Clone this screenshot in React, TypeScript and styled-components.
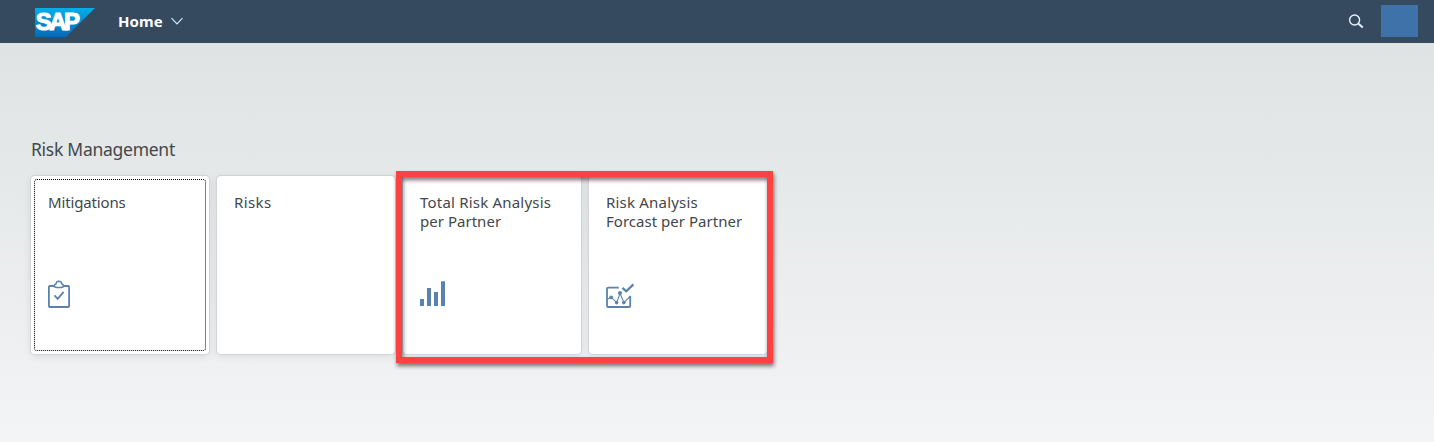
import React from "react";
import styled, { createGlobalStyle } from "styled-components";

const GlobalStyle = createGlobalStyle`
  * { box-sizing: border-box; }
  body { margin: 0; }
`;

const Page = styled.div`
  height: 442px;
  overflow: hidden;
  display: flex;
  flex-direction: column;
  background: linear-gradient(to bottom, #dfe3e4 43px, #f3f4f5 100%);
  font-family: "Noto Sans", "Open Sans", sans-serif;
  color: #43474b;
`;

const ShellBar = styled.header`
  height: 43px;
  flex: none;
  display: flex;
  align-items: center;
  padding: 0 16px 1px 35px;
  background: #354a5f;
`;

const Logo = styled.svg`
  display: block;
  margin-top: 3px;
`;

const HomeMenu = styled.div`
  display: flex;
  align-items: center;
  gap: 8px;
  margin-left: 23px;
  color: #fff;
  font: 700 15px/20px "Noto Sans", sans-serif;
  letter-spacing: 0.12px;
`;

const Tools = styled.div`
  display: flex;
  align-items: center;
  gap: 17px;
  margin-left: auto;
`;

const Avatar = styled.div`
  width: 37px;
  height: 32px;
  background: #3e72a8;
`;

const Content = styled.main`
  padding: 94px 31px 0;
`;

const GroupTitle = styled.h2`
  margin: 0 0 14px;
  height: 25px;
  font-size: 17.5px;
  line-height: 25px;
  font-weight: 400;
  letter-spacing: -0.27px;
  white-space: nowrap;
`;

const Tiles = styled.div`
  display: flex;
  gap: 8px;
`;

const Highlighted = styled.div`
  position: relative;
  display: flex;
  gap: 8px;
`;

const HighlightFrame = styled.div`
  position: absolute;
  left: -7px;
  top: -5px;
  width: 377px;
  height: 192px;
  border: 6px solid #ff4141;
  filter: drop-shadow(1px 3px 2px rgba(0, 0, 0, 0.55));
`;

const Tile = styled.div`
  width: 178px;
  height: 178px;
  padding: 3px;
  border-radius: 4px;
  background: #fff;
  box-shadow: 0 0 0 1px #d2d4d6, 0 2px 8px rgba(0, 0, 0, 0.1);
`;

const TileBody = styled.div<{ $focused?: boolean }>`
  height: 100%;
  display: flex;
  flex-direction: column;
  justify-content: space-between;
  padding: 13px 0 40px 13px;
  border: 1px dotted ${(p) => (p.$focused ? "#000" : "transparent")};
  border-radius: 3px;
`;

const TileTitle = styled.div<{ $track?: number }>`
  font-size: 15px;
  line-height: 19px;
  letter-spacing: ${(p) => p.$track ?? 0}px;
  white-space: pre-line;
`;

const TileLine = styled.span`
  letter-spacing: 0.03px;
`;

const TileIcon = styled.svg`
  display: block;
  fill: none;
  stroke: #5b82ac;
  stroke-width: 1.8;
`;

const LogoText = styled.text`
  font: 700 24px "Liberation Sans", sans-serif;
  letter-spacing: -2.6px;
  fill: #fff;
  stroke: #fff;
  stroke-width: 1.1px;
`;

function ClipboardIcon() {
  return (
    <TileIcon width="30" height="30" viewBox="0 0 30 30">
      <path d="M6 6H1.8Q.9 6 .9 7V26Q.9 27 1.8 27H20.2Q21.1 27 21.1 26V7Q21.1 6 20.2 6H15.4" />
      <path d="M6.4 6.7V5.6Q6.4 4.4 7.9 4Q8.5 1.2 10.9 1.2T13.9 4Q15.3 4.4 15.3 5.6V6.7Q10.9 8.5 6.4 6.7Z" strokeWidth="1.5" />
      <path d="M6.5 15.3L9.7 18.8L15.6 11.9" />
    </TileIcon>
  );
}

function BarsIcon() {
  return (
    <TileIcon width="30" height="30" viewBox="0 0 30 30">
      <g fill="#5b82ac" stroke="none">
        <rect x="0" y="19" width="4" height="7" />
        <rect x="7" y="8" width="4" height="18" />
        <rect x="14" y="12" width="4" height="14" />
        <rect x="21" y="1.3" width="4" height="24.7" />
      </g>
    </TileIcon>
  );
}

function ForecastIcon() {
  return (
    <TileIcon width="30" height="30" viewBox="0 0 30 30">
      <path d="M12.7 7.7H2Q1 7.7 1 8.7V26Q1 27 2 27H23.2Q24.2 27 24.2 26V16" />
      <path d="M.9 19.5L5.2 17.3L10.8 22.6L14 13.3L18 22.6L24.5 16" strokeWidth="1.1" />
      <g fill="#5b82ac" stroke="none">
        <circle cx="5.2" cy="17.3" r="1.9" />
        <circle cx="10.6" cy="22.6" r="1.8" />
        <circle cx="14" cy="13" r="2" />
        <circle cx="17.8" cy="22.6" r="1.8" />
      </g>
      <path d="M16.4 7.8L20.3 11.3L27.4 4.4" strokeWidth="2.3" />
    </TileIcon>
  );
}

function SearchIcon() {
  return (
    <svg width="16" height="18" viewBox="0 -2 16 18" fill="none" stroke="#e5f1ff" strokeWidth="1.4">
      <circle cx="6.6" cy="6" r="5" />
      <path d="M10.2 9.6L14.8 13.6" strokeWidth="2" />
    </svg>
  );
}

export default function App() {
  return (
    <Page>
      <GlobalStyle />
      <ShellBar>
        <Logo width="60" height="29" viewBox="0 0 60 29">
          <defs>
            <linearGradient id="sapBlue" x1="0" y1="0" x2="0" y2="1">
              <stop offset="0" stopColor="#05aeea" />
              <stop offset="1" stopColor="#0968b7" />
            </linearGradient>
          </defs>
          <path d="M0 0H60L31 29H0Z" fill="url(#sapBlue)" />
          <LogoText x="0.8" y="22.3">SAP</LogoText>
        </Logo>
        <HomeMenu>
          Home
          <svg width="12" height="8" viewBox="0 0 12 8" fill="none" stroke="#d1e8ff" strokeWidth="1.2">
            <path d="M.5 1.2L6 6.8L11.5 1.2" />
          </svg>
        </HomeMenu>
        <Tools>
          <SearchIcon />
          <Avatar />
        </Tools>
      </ShellBar>
      <Content>
        <GroupTitle>Risk Management</GroupTitle>
        <Tiles>
          <Tile>
            <TileBody $focused>
              <TileTitle $track={-0.15}>Mitigations</TileTitle>
              <ClipboardIcon />
            </TileBody>
          </Tile>
          <Tile>
            <TileBody>
              <TileTitle $track={0.4}>Risks</TileTitle>
            </TileBody>
          </Tile>
          <Highlighted>
            <Tile>
              <TileBody>
                <TileTitle $track={0.2}>
                  {"Total Risk Analysis\n"}
                  <TileLine>per Partner</TileLine>
                </TileTitle>
                <BarsIcon />
              </TileBody>
            </Tile>
            <Tile>
              <TileBody>
                <TileTitle $track={0.2}>
                  {"Risk Analysis\n"}
                  <TileLine>Forcast per Partner</TileLine>
                </TileTitle>
                <ForecastIcon />
              </TileBody>
            </Tile>
            <HighlightFrame />
          </Highlighted>
        </Tiles>
      </Content>
    </Page>
  );
}
